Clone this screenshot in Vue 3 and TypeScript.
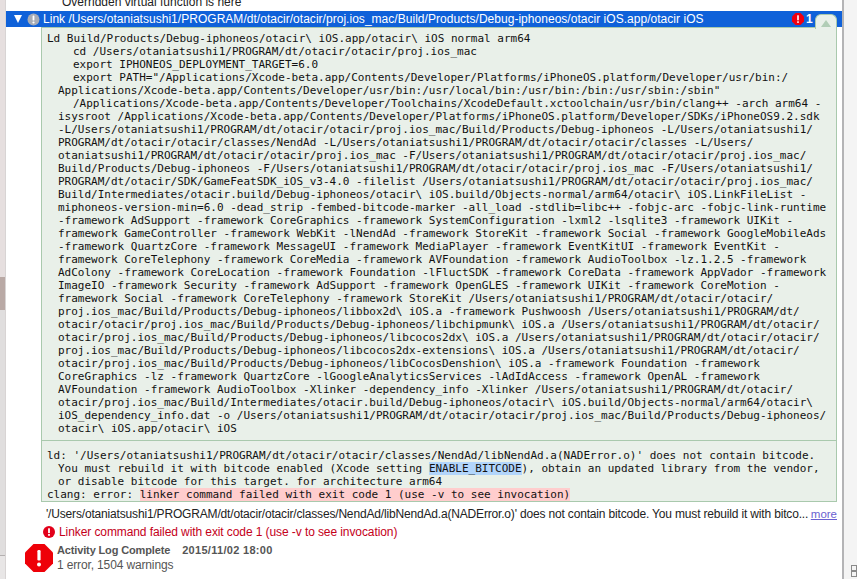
<script setup lang="ts">
type Line = { t: string; k: '' | 'cmd' | 'wrap' }
const raw = `Ld Build/Products/Debug-iphoneos/otacir\\ iOS.app/otacir\\ iOS normal arm64
    cd /Users/otaniatsushi1/PROGRAM/dt/otacir/otacir/proj.ios_mac
    export IPHONEOS_DEPLOYMENT_TARGET=6.0
    export PATH="/Applications/Xcode-beta.app/Contents/Developer/Platforms/iPhoneOS.platform/Developer/usr/bin:/
Applications/Xcode-beta.app/Contents/Developer/usr/bin:/usr/local/bin:/usr/bin:/bin:/usr/sbin:/sbin"
    /Applications/Xcode-beta.app/Contents/Developer/Toolchains/XcodeDefault.xctoolchain/usr/bin/clang++ -arch arm64 -
isysroot /Applications/Xcode-beta.app/Contents/Developer/Platforms/iPhoneOS.platform/Developer/SDKs/iPhoneOS9.2.sdk
-L/Users/otaniatsushi1/PROGRAM/dt/otacir/otacir/proj.ios_mac/Build/Products/Debug-iphoneos -L/Users/otaniatsushi1/
PROGRAM/dt/otacir/otacir/classes/NendAd -L/Users/otaniatsushi1/PROGRAM/dt/otacir/otacir/classes -L/Users/
otaniatsushi1/PROGRAM/dt/otacir/otacir/proj.ios_mac -F/Users/otaniatsushi1/PROGRAM/dt/otacir/otacir/proj.ios_mac/
Build/Products/Debug-iphoneos -F/Users/otaniatsushi1/PROGRAM/dt/otacir/otacir/proj.ios_mac -F/Users/otaniatsushi1/
PROGRAM/dt/otacir/SDK/GameFeatSDK_iOS_v3-4.0 -filelist /Users/otaniatsushi1/PROGRAM/dt/otacir/otacir/proj.ios_mac/
Build/Intermediates/otacir.build/Debug-iphoneos/otacir\\ iOS.build/Objects-normal/arm64/otacir\\ iOS.LinkFileList -
miphoneos-version-min=6.0 -dead_strip -fembed-bitcode-marker -all_load -stdlib=libc++ -fobjc-arc -fobjc-link-runtime
-framework AdSupport -framework CoreGraphics -framework SystemConfiguration -lxml2 -lsqlite3 -framework UIKit -
framework GameController -framework WebKit -lNendAd -framework StoreKit -framework Social -framework GoogleMobileAds
-framework QuartzCore -framework MessageUI -framework MediaPlayer -framework EventKitUI -framework EventKit -
framework CoreTelephony -framework CoreMedia -framework AVFoundation -framework AudioToolbox -lz.1.2.5 -framework
AdColony -framework CoreLocation -framework Foundation -lFluctSDK -framework CoreData -framework AppVador -framework
ImageIO -framework Security -framework AdSupport -framework OpenGLES -framework UIKit -framework CoreMotion -
framework Social -framework CoreTelephony -framework StoreKit /Users/otaniatsushi1/PROGRAM/dt/otacir/otacir/
proj.ios_mac/Build/Products/Debug-iphoneos/libbox2d\\ iOS.a -framework Pushwoosh /Users/otaniatsushi1/PROGRAM/dt/
otacir/otacir/proj.ios_mac/Build/Products/Debug-iphoneos/libchipmunk\\ iOS.a /Users/otaniatsushi1/PROGRAM/dt/otacir/
otacir/proj.ios_mac/Build/Products/Debug-iphoneos/libcocos2dx\\ iOS.a /Users/otaniatsushi1/PROGRAM/dt/otacir/otacir/
proj.ios_mac/Build/Products/Debug-iphoneos/libcocos2dx-extensions\\ iOS.a /Users/otaniatsushi1/PROGRAM/dt/otacir/
otacir/proj.ios_mac/Build/Products/Debug-iphoneos/libCocosDenshion\\ iOS.a -framework Foundation -framework
CoreGraphics -lz -framework QuartzCore -lGoogleAnalyticsServices -lAdIdAccess -framework OpenAL -framework
AVFoundation -framework AudioToolbox -Xlinker -dependency_info -Xlinker /Users/otaniatsushi1/PROGRAM/dt/otacir/
otacir/proj.ios_mac/Build/Intermediates/otacir.build/Debug-iphoneos/otacir\\ iOS.build/Objects-normal/arm64/otacir\\
iOS_dependency_info.dat -o /Users/otaniatsushi1/PROGRAM/dt/otacir/otacir/proj.ios_mac/Build/Products/Debug-iphoneos/
otacir\\ iOS.app/otacir\\ iOS`
const lines: Line[] = raw.split('\n').map((l, i) => {
  if (i === 0) return { t: l, k: '' }
  if (l.startsWith('    ')) return { t: l.trim(), k: 'cmd' }
  return { t: l, k: 'wrap' }
})
</script>

<template>
  <div class="page">
    <aside class="left">
      <div class="l1"></div>
      <div class="l2"></div>
      <div class="l3"></div>
      <div class="l4"></div>
    </aside>
    <main class="main">
      <div class="note">Overridden virtual function is here</div>
      <div class="header">
        <svg class="tri" width="8" height="8" viewBox="0 0 8 8"><path d="M0 0h8L4 8z" fill="#fff" /></svg>
        <svg class="hicon" width="13" height="13" viewBox="0 0 13 13">
          <circle cx="6.500" cy="6.500" r="6" fill="#a7acb6" />
          <rect x="5.600" y="2.500" width="1.800" height="5" rx="0.600" fill="#fff" />
          <circle cx="6.500" cy="9.500" r="1.100" fill="#fff" />
        </svg>
        <span class="title">Link /Users/otaniatsushi1/PROGRAM/dt/otacir/otacir/proj.ios_mac/Build/Products/Debug-iphoneos/otacir iOS.app/otacir iOS</span>
        <svg class="badge" width="12" height="12" viewBox="0 0 12 12">
          <path d="M3.500 0h5L12 3.500v5L8.500 12h-5L0 8.500v-5z" fill="#f00010" />
          <rect x="5.200" y="2.300" width="1.600" height="5" fill="#fff" />
          <rect x="5.200" y="8.300" width="1.600" height="1.600" fill="#fff" />
        </svg>
        <span class="count">1</span>
      </div>
      <div class="panel">
        <div class="tab">
          <svg width="10" height="7" viewBox="0 0 10 7"><path d="M5 0l5 7H0z" fill="#b1cdb6" /></svg>
        </div>
        <div class="cmd-block">
          <div v-for="(l, i) in lines" :key="i" class="line" :class="l.k">{{ l.t }}</div>
        </div>
        <div class="msg-block">
          <div class="line">ld: '/Users/otaniatsushi1/PROGRAM/dt/otacir/otacir/classes/NendAd/libNendAd.a(NADError.o)' does not contain bitcode.</div>
          <div class="line wrap">You must rebuild it with bitcode enabled (Xcode setting <span class="sel">ENABLE_BITCODE</span>), obtain an updated library from the vendor,</div>
          <div class="line wrap">or disable bitcode for this target. for architecture arm64</div>
          <div class="line">clang: error: <span class="err">linker command failed with exit code 1 (use -v to see invocation)</span></div>
        </div>
      </div>
      <div class="summary">
        <span class="summary-text">'/Users/otaniatsushi1/PROGRAM/dt/otacir/otacir/classes/NendAd/libNendAd.a(NADError.o)' does not contain bitcode. You must rebuild it with bitco...</span>
        <a class="more">more</a>
      </div>
      <div class="linker">
        <svg width="12" height="12" viewBox="0 0 12 12">
          <circle cx="6" cy="6" r="6" fill="#e2001a" />
          <rect x="5.100" y="2.300" width="1.800" height="4.800" fill="#fff" />
          <rect x="5.100" y="8" width="1.800" height="1.800" fill="#fff" />
        </svg>
        <span>Linker command failed with exit code 1 (use -v to see invocation)</span>
      </div>
      <div class="activity">
        <svg width="28" height="28" viewBox="0 0 28 28">
          <path d="M8.500 0h11L28 8.500v11L19.500 28h-11L0 19.500v-11z" fill="#ee0008" />
          <rect x="12.400" y="6" width="3.200" height="10.500" rx="1.200" fill="#fff" />
          <circle cx="14" cy="20.500" r="2" fill="#fff" />
        </svg>
        <div class="activity-text">
          <div class="a1"><b class="head">Activity Log Complete</b><b class="date">2015/11/02 18:00</b></div>
          <div class="a2">1 error, 1504 warnings</div>
        </div>
      </div>
    </main>
    <aside class="right">
      <div class="squares">
        <i></i>
        <i></i>
      </div>
    </aside>
  </div>
</template>

<style>
html, body { margin: 0; background: #fff; overflow: hidden; }
</style>

<style scoped>
.page { display: flex; width: 857px; height: 579px; overflow: hidden; font-family: "Liberation Sans", Arial, sans-serif; }
.left { width: 5px; flex: none; display: flex; flex-direction: column; border-right: 1px solid #d8d4d4; }
.l1 { height: 277px; flex: none; background: #e6dfdf; }
.l2 { height: 33px; flex: none; background: #b9a9a5; }
.l3 { height: 245px; flex: none; background: #e0dede; }
.l4 { flex: 1; background: #e8e6e6; border-top: 1px solid #b4b0b0; }
.main { flex: 1; min-width: 0; background: #fff; }
.right { width: 13px; flex: none; background: #f4f4f4; border-left: 2px solid #b4b4b6; position: relative; }
.squares { position: absolute; left: 7px; top: 565px; display: flex; flex-direction: column; }
.squares i { display: block; width: 4px; height: 4px; border: 1px solid #8a8a8a; }
.note { height: 11px; line-height: 4px; font-size: 12px; color: #222; padding-left: 56px; overflow: hidden; }
.header { height: 16px; display: flex; align-items: center; background: #0f61d9; color: #fff; font-size: 12px; }
.tri { margin-left: 8px; flex: none; }
.hicon { margin-left: 5px; flex: none; }
.title { margin-left: 3px; white-space: nowrap; flex: none; width: 749px; letter-spacing: 0.03px; }
.badge { flex: none; }
.count { font-weight: 700; margin-left: 2px; }
.panel { position: relative; margin: 0 5px 0 35px; background: #e9f0e9; border: 1px solid #a9c9ad; height: 475px; box-sizing: border-box; font-family: "DejaVu Sans Mono", monospace; font-size: 11px; color: #111; }
.tab { position: absolute; right: -1px; top: -14px; width: 22px; height: 15px; box-sizing: border-box; background: #e9f0e9; border: 1px solid #a9c9ad; border-bottom: 0; border-radius: 6px 6px 0 0; display: flex; justify-content: center; padding-top: 5px; }
.tab svg { display: block; }
.cmd-block { padding: 4px 5px 0; height: 413px; box-sizing: border-box; border-bottom: 1px solid #a9c9ad; }
.msg-block { padding: 8px 5px 0; }
.line { height: 13px; line-height: 13px; white-space: pre; }
.cmd { margin-left: 26px; }
.wrap { margin-left: 11px; }
.sel { background: #b2d5fb; }
.err { background: #ffcdcd; }
.summary { margin: 5px 5px 0 40px; display: flex; justify-content: space-between; align-items: center; height: 14px; font-size: 12px; color: #222; white-space: nowrap; }
.summary-text { letter-spacing: -0.17px; }
.more { color: #6a5fd0; text-decoration: underline; font-size: 11.500px; }
.linker { display: flex; align-items: center; gap: 4px; margin: 4px 0 0 37px; height: 14px; font-size: 12px; color: #c4001a; letter-spacing: -0.09px; }
.activity { display: flex; margin: 5px 0 0 19px; }
.activity-text { margin: -1px 0 0 4px; font-size: 11px; color: #555; }
.a1 { height: 15px; line-height: 15px; }
.head { letter-spacing: -0.14px; }
.date { margin-left: 12px; letter-spacing: 0.3px; }
.a2 { height: 15px; line-height: 15px; font-size: 12px; color: #555; letter-spacing: -0.14px; }
</style>
